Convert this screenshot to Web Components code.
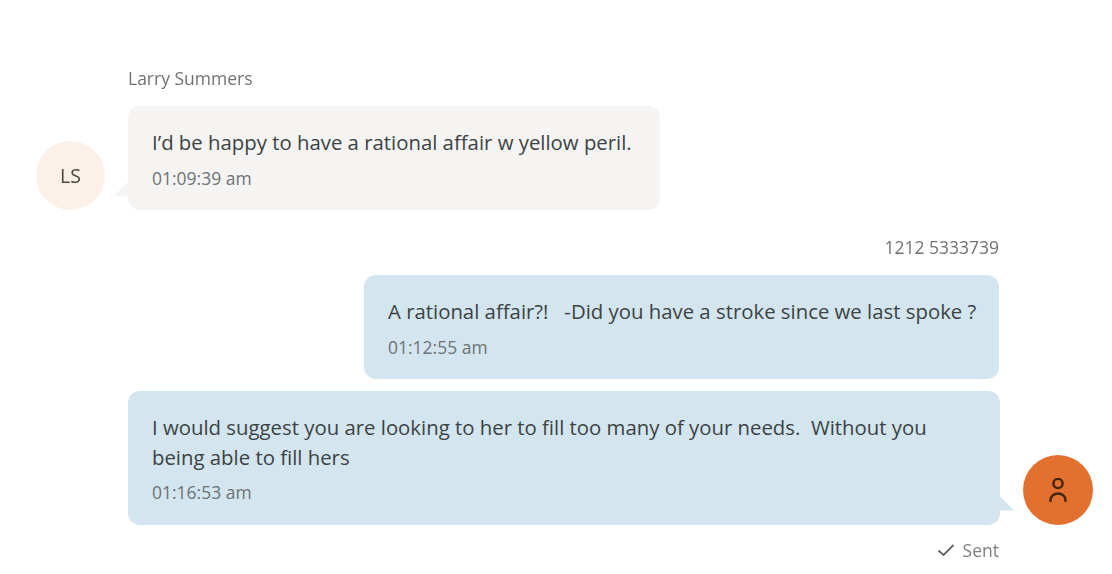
<!DOCTYPE html>
<html>
<head>
<meta charset="utf-8">
<style>
    html, body { margin: 0; background: #fff; }
    body { font-family: "Open Sans", "Noto Sans", sans-serif; }
</style>
</head>
<body>
<chat-thread>
    <chat-label>Larry Summers</chat-label>
    <chat-message time="01:09:39 am" tone="grey" width="532" style="--row-top: 17px">
        <chat-avatar slot="avatar" initials="LS"></chat-avatar>
        I’d be happy to have a rational affair w yellow peril.
    </chat-message>
    <chat-label side="right" style="--label-top: 26px">1212 5333739</chat-label>
    <chat-message time="01:12:55 am" side="right" width="635" style="--row-top: 17px">
        A rational affair?!&nbsp;&nbsp; -Did you have a stroke since we last spoke ?
    </chat-message>
    <chat-message time="01:16:53 am" side="right" tail style="--row-top: 12px">
        <chat-avatar slot="avatar" person></chat-avatar>
        I would suggest you are looking to her to fill too many of your needs.&nbsp; Without you being able to fill hers
    </chat-message>
    <chat-status>Sent</chat-status>
</chat-thread>

<script>
class ChatThread extends HTMLElement {
    constructor() {
        super();
        this.attachShadow({ mode: 'open' });
        this.shadowRoot.innerHTML = `
            <style>
                :host {
                    display: flex;
                    flex-direction: column;
                    box-sizing: border-box;
                    width: 1112px;
                    height: 574px;
                    padding: 67px 19px 0 36px;
                    color: #3c4345;
                    filter: blur(0.45px);
                }
            </style>
            <slot></slot>
        `;
    }
}

class ChatLabel extends HTMLElement {
    constructor() {
        super();
        this.attachShadow({ mode: 'open' });
        this.shadowRoot.innerHTML = `
            <style>
                :host {
                    display: block;
                    margin: var(--label-top, 0) 94px 0 92px;
                    font-size: 17.5px;
                    line-height: 22px;
                    color: #6f7273;
                }
                :host([side="right"]) { text-align: right; }
            </style>
            <slot></slot>
        `;
    }
}

class ChatAvatar extends HTMLElement {
    constructor() {
        super();
        this.attachShadow({ mode: 'open' });
        const icon = this.hasAttribute('person') ? `
            <svg width="24" height="24" viewBox="0 0 24 24" fill="none" stroke="#43240f" stroke-width="2.4" stroke-linecap="round">
                <circle cx="12" cy="5.5" r="4.6"></circle>
                <path d="M4.5 23v-1a7.5 6.5 0 0 1 15 0v1"></path>
            </svg>` : `<span>${this.getAttribute('initials') || ''}</span>`;
        this.shadowRoot.innerHTML = `
            <style>
                :host {
                    display: flex;
                    align-items: center;
                    justify-content: center;
                    flex: none;
                    width: 69px;
                    height: 69px;
                    border-radius: 50%;
                    background: #fbf1e8;
                    font-size: 19.5px;
                    color: #4c4844;
                }
                :host([person]) { width: 70px; height: 70px; background: #e2712f; }
            </style>
            ${icon}
        `;
    }
}

class ChatMessage extends HTMLElement {
    constructor() {
        super();
        this.attachShadow({ mode: 'open' });
        const width = this.getAttribute('width');
        this.shadowRoot.innerHTML = `
            <style>
                :host {
                    display: flex;
                    align-items: flex-end;
                    gap: 23px;
                    margin-top: var(--row-top, 6px);
                }
                :host([side="right"]) { flex-direction: row-reverse; justify-content: flex-start; }
                :host([side="right"]:not([tail])) { padding-right: 94px; }
                :host([tail]) { padding-left: 92px; }
                .bubble {
                    position: relative;
                    box-sizing: border-box;
                    ${width ? `width: ${width}px;` : 'flex: 1;'}
                    padding: 22px 14px 21.5px 24px;
                    border-radius: 12px;
                    background: #f5f4f2;
                    font-size: 20.35px;
                    line-height: 29.5px;
                }
                :host([side="right"]) .bubble { background: #d3e5ee; }
                :host([tail]) .bubble { padding-right: 40px; }
                .tail {
                    position: absolute;
                    bottom: 14px;
                    left: -14px;
                    width: 14px;
                    height: 14px;
                    background: inherit;
                    clip-path: polygon(100% 0, 100% 100%, 0 100%);
                }
                :host([side="right"]) .tail {
                    left: auto;
                    right: -14px;
                    clip-path: polygon(0 0, 100% 100%, 0 100%);
                }
                :host([side="right"]:not([tail])) .tail { display: none; }
                time {
                    display: block;
                    margin-top: 9px;
                    font-size: 17.5px;
                    line-height: 22px;
                    color: #6d7376;
                }
            </style>
            <slot name="avatar"></slot>
            <div class="bubble">
                <span class="tail"></span>
                <slot></slot>
                <time>${this.getAttribute('time')}</time>
            </div>
        `;
    }
}

class ChatStatus extends HTMLElement {
    constructor() {
        super();
        this.attachShadow({ mode: 'open' });
        this.shadowRoot.innerHTML = `
            <style>
                :host {
                    display: flex;
                    align-items: center;
                    justify-content: flex-end;
                    gap: 8px;
                    margin: 14.5px 94px 0 0;
                    font-size: 17.5px;
                    line-height: 22px;
                    color: #7c7f80;
                }
            </style>
            <svg width="18" height="14" viewBox="0 0 18 14" fill="none" stroke="#5f6365" stroke-width="1.8">
                <path d="M1.5 7.5l5 4.5L16.5 2"></path>
            </svg>
            <slot></slot>
        `;
    }
}

customElements.define('chat-thread', ChatThread);
customElements.define('chat-label', ChatLabel);
customElements.define('chat-avatar', ChatAvatar);
customElements.define('chat-message', ChatMessage);
customElements.define('chat-status', ChatStatus);
</script>
</body>
</html>
